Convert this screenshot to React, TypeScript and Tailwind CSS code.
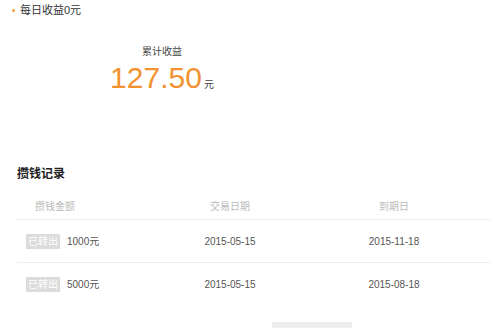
export default function App() {
  const rows = [
    { amount: "1000元", trade: "2015-05-15", due: "2015-11-18" },
    { amount: "5000元", trade: "2015-05-15", due: "2015-08-18" },
  ];

  return (
    <div className="w-[491px] h-[335px] bg-white overflow-hidden font-['Liberation_Sans','Noto_Sans_CJK_SC',sans-serif]">
      <div className="h-[19px] flex items-center pl-[12px] pt-[1px]">
        <span className="w-[3px] h-[3px] rounded-full bg-[#f39a3b] mr-[5px]" />
        <span className="text-[11px] text-[#333]">每日收益0元</span>
      </div>

      <div className="w-[324px] flex flex-col items-center pt-[26px]">
        <div className="text-[10px] leading-[14px] text-[#444]">累计收益</div>
        <div className="flex items-baseline mt-[1px]">
          <span className="text-[30px] leading-[36px] text-[#f39230]">127.50</span>
          <span className="text-[10px] text-[#444] ml-[2px]">元</span>
        </div>
      </div>

      <div className="mt-[70px] pl-[17px] h-[16px] flex items-center text-[12px] font-bold text-[#222]">
        攒钱记录
      </div>

      <div className="ml-[17px] mt-[11px]">
        <div className="flex h-[27px] items-center text-[10px] text-[#bbb] border-b border-[#eee]">
          <div className="w-[133px] pl-[18px]">攒钱金额</div>
          <div className="w-[160px] text-center">交易日期</div>
          <div className="w-[168px] text-center">到期日</div>
        </div>
        {rows.map((r, i) => (
          <div
            key={i}
            className={`flex h-[43px] items-center text-[10px] text-[#555] ${i === 0 ? "border-b border-[#eee]" : ""}`}
          >
            <div className="w-[133px] pl-[9px] flex items-center">
              <span className="bg-[#dcdcdc] text-white text-[10px] h-[15px] leading-[15px] px-[2px] mr-[7px]">已转出</span>
              <span>{r.amount}</span>
            </div>
            <div className="w-[160px] text-center">{r.trade}</div>
            <div className="w-[168px] text-center">{r.due}</div>
          </div>
        ))}
      </div>

      <div className="ml-[272px] mt-[16px] w-[80px] h-[6px] bg-[#eeeeee]" />
    </div>
  );
}
